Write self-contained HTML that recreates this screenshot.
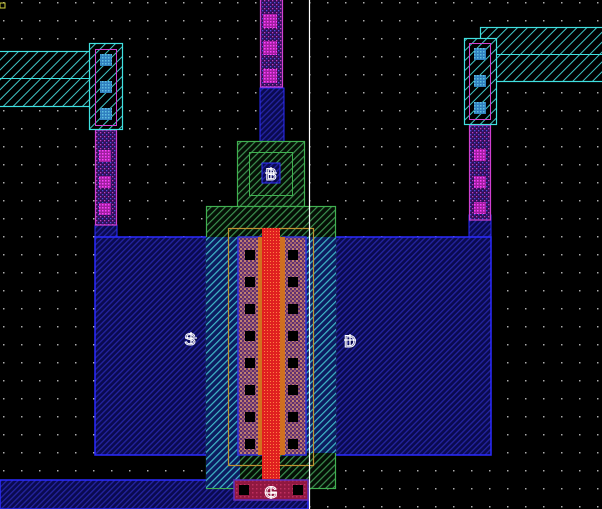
<!DOCTYPE html>
<html><head><style>html,body{margin:0;padding:0;background:#000;overflow:hidden}svg{display:block}</style></head><body>
<svg width="602" height="509" xmlns="http://www.w3.org/2000/svg">
<defs>
<pattern id="grid" width="18" height="18" patternUnits="userSpaceOnUse" x="3" y="2"><rect x="0" y="0" width="1.5" height="1.5" fill="#aaa"/></pattern>
<pattern id="blue" width="4" height="4" patternUnits="userSpaceOnUse" patternTransform="rotate(45)"><rect width="4" height="4" fill="#0a0a50"/><rect width="1.3" height="4" fill="#2424a0"/></pattern>
<pattern id="cyan" width="7" height="7" patternUnits="userSpaceOnUse" patternTransform="rotate(45)"><rect width="7" height="7" fill="#000"/><rect width="1" height="7" fill="#40c8c8"/></pattern>
<pattern id="cyanb" width="5" height="5" patternUnits="userSpaceOnUse" patternTransform="rotate(45)"><rect width="5" height="5" fill="#0c1c60"/><rect width="1.2" height="5" fill="#40b8c8"/></pattern>
<pattern id="green" width="5" height="5" patternUnits="userSpaceOnUse" patternTransform="rotate(45)"><rect width="5" height="5" fill="#050f05"/><rect width="1.2" height="5" fill="#3c9050"/></pattern>
<pattern id="mag" width="4" height="4" patternUnits="userSpaceOnUse"><rect width="4" height="4" fill="#30105a"/><rect width="1.3" height="1.3" fill="#c040c0"/><rect x="2" y="2" width="1.3" height="1.3" fill="#5050e0"/></pattern>
<pattern id="diff" width="4" height="4" patternUnits="userSpaceOnUse"><rect width="4" height="4" fill="#603070"/><rect width="2" height="2" fill="#c08070"/><rect x="2" y="2" width="2" height="2" fill="#a06070"/></pattern>
<pattern id="poly" width="3" height="3" patternUnits="userSpaceOnUse"><rect width="3" height="3" fill="#e02020"/><rect width="1" height="1" fill="#ff8040"/></pattern>
<pattern id="gpad" width="4" height="4" patternUnits="userSpaceOnUse"><rect width="4" height="4" fill="#901840"/><rect width="1.5" height="1.5" fill="#c03060"/></pattern>
<pattern id="cut" width="3" height="3" patternUnits="userSpaceOnUse"><rect width="3" height="3" fill="#3080c0"/><rect width="1.5" height="1.5" fill="#60c0e0"/></pattern>
<pattern id="mcut" width="3" height="3" patternUnits="userSpaceOnUse"><rect width="3" height="3" fill="#a020a0"/><rect width="1.5" height="1.5" fill="#ff40ff"/></pattern>
</defs>
<rect width="602" height="509" fill="#000"/>
<rect width="602" height="509" fill="url(#grid)"/>
<rect x="0" y="3" width="5" height="5" fill="none" stroke="#d0d040" stroke-width="1"/>

<rect x="0" y="480" width="308" height="29" fill="url(#blue)" stroke="#2a2aff" stroke-width="1.5"/>
<rect x="95" y="225" width="22" height="97" fill="url(#blue)" stroke="#2a2aff"/>
<rect x="469" y="215" width="22" height="102" fill="url(#blue)" stroke="#2a2aff"/>
<rect x="95" y="237" width="396" height="218" fill="url(#blue)" stroke="#2a2aff" stroke-width="1.5"/>
<rect x="260" y="88" width="24" height="95" fill="url(#blue)" stroke="#2a2aff"/>

<rect x="237.5" y="141.5" width="67" height="65" fill="url(#green)" stroke="#40b050" stroke-width="1.2"/>
<rect x="249.5" y="152.5" width="43" height="43" fill="none" stroke="#40b050" stroke-width="1"/>
<rect x="262" y="163" width="18" height="20" fill="url(#blue)" stroke="#3030ff"/>
<rect x="206.5" y="206.5" width="129" height="282" fill="url(#green)" stroke="#40b050" stroke-width="1.2"/>
<rect x="206" y="237" width="34" height="251" fill="url(#cyanb)"/>
<rect x="305" y="237" width="31" height="216" fill="url(#cyanb)"/>
<rect x="228.5" y="228.5" width="85" height="237" fill="none" stroke="#c09030" stroke-width="1.2"/>

<rect x="238" y="237" width="24" height="218" fill="url(#diff)" stroke="#3030e0" stroke-width="1.5"/>
<rect x="283" y="237" width="23" height="218" fill="url(#diff)" stroke="#3030e0" stroke-width="1.5"/>
<rect x="258" y="237" width="27" height="218" fill="#d07020"/>
<rect x="262" y="228" width="18" height="260" fill="url(#poly)"/>
<rect x="234" y="480" width="74" height="20" fill="url(#gpad)" stroke="#6030c0" stroke-width="1.5"/>
<rect x="239" y="485" width="10" height="10" fill="#000"/>
<rect x="293" y="485" width="10" height="10" fill="#000"/>
<g fill="#000">
<rect x="245" y="250" width="10" height="10"/><rect x="288" y="250" width="10" height="10"/>
<rect x="245" y="277" width="10" height="10"/><rect x="288" y="277" width="10" height="10"/>
<rect x="245" y="304" width="10" height="10"/><rect x="288" y="304" width="10" height="10"/>
<rect x="245" y="331" width="10" height="10"/><rect x="288" y="331" width="10" height="10"/>
<rect x="245" y="358" width="10" height="10"/><rect x="288" y="358" width="10" height="10"/>
<rect x="245" y="385" width="10" height="10"/><rect x="288" y="385" width="10" height="10"/>
<rect x="245" y="412" width="10" height="10"/><rect x="288" y="412" width="10" height="10"/>
<rect x="245" y="439" width="10" height="10"/><rect x="288" y="439" width="10" height="10"/>
</g>

<rect x="260.5" y="-1" width="22" height="88" fill="url(#mag)" stroke="#d040d0" stroke-width="1.2"/>
<rect x="263" y="14" width="14" height="14" fill="url(#mcut)"/>
<rect x="263" y="41" width="14" height="14" fill="url(#mcut)"/>
<rect x="263" y="69" width="14" height="14" fill="url(#mcut)"/>
<rect x="95.5" y="130" width="21" height="95" fill="url(#mag)" stroke="#d040d0" stroke-width="1.2"/>
<rect x="99" y="150" width="12" height="12" fill="url(#mcut)"/>
<rect x="99" y="176" width="12" height="12" fill="url(#mcut)"/>
<rect x="99" y="203" width="12" height="12" fill="url(#mcut)"/>
<rect x="469.5" y="125" width="21" height="95" fill="url(#mag)" stroke="#d040d0" stroke-width="1.2"/>
<rect x="474" y="149" width="12" height="12" fill="url(#mcut)"/>
<rect x="474" y="176" width="12" height="12" fill="url(#mcut)"/>
<rect x="474" y="202" width="12" height="12" fill="url(#mcut)"/>

<rect x="-2" y="51.5" width="113" height="55" fill="url(#cyan)" stroke="#40e0e0" stroke-width="1.2"/>
<line x1="0" y1="78.5" x2="111" y2="78.5" stroke="#40e0e0"/>
<rect x="89.5" y="43.5" width="33" height="86" fill="url(#cyan)" stroke="#40e0e0" stroke-width="1.2"/>
<rect x="95.5" y="49.5" width="21" height="76" fill="none" stroke="#d040d0"/>
<rect x="100" y="54" width="12" height="12" fill="url(#cut)"/>
<rect x="100" y="81" width="12" height="12" fill="url(#cut)"/>
<rect x="100" y="108" width="12" height="12" fill="url(#cut)"/>
<rect x="480.5" y="27.5" width="124" height="54" fill="url(#cyan)" stroke="#40e0e0" stroke-width="1.2"/>
<line x1="480" y1="54.5" x2="602" y2="54.5" stroke="#40e0e0"/>
<rect x="464.5" y="38.5" width="32" height="86" fill="url(#cyan)" stroke="#40e0e0" stroke-width="1.2"/>
<rect x="469.5" y="43.5" width="21" height="76" fill="none" stroke="#d040d0"/>
<rect x="474" y="48" width="12" height="12" fill="url(#cut)"/>
<rect x="474" y="75" width="12" height="12" fill="url(#cut)"/>
<rect x="474" y="102" width="12" height="12" fill="url(#cut)"/>

<line x1="309.5" y1="0" x2="309.5" y2="509" stroke="#fff" stroke-width="1.2"/>

<g font-family="Liberation Sans, sans-serif" font-size="17" fill="none" stroke="#fff" stroke-width="1" text-anchor="middle">
<text x="271" y="180">B</text>
<text x="190" y="345">S</text>
<text x="350" y="347">D</text>
<text x="271" y="498">G</text>
</g>
<g stroke="#fff" stroke-width="1.3">
<path d="M265 173h12M271 167v12"/>
<path d="M185 338h12M191 332v12"/>
<path d="M344 340h12M350 334v12"/>
<path d="M265 493h12M271 487v12"/>
</g>
</svg>
</body></html>
